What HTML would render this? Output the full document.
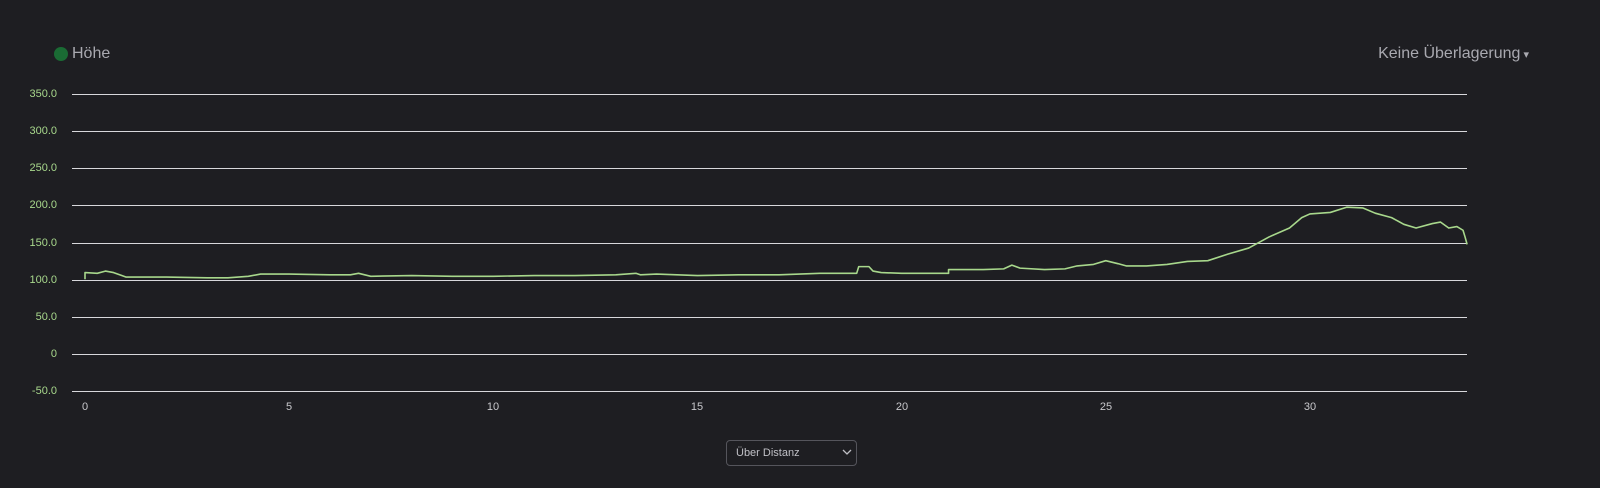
<!DOCTYPE html>
<html><head><meta charset="utf-8"><style>
html,body{margin:0;padding:0;width:1600px;height:488px;background:#1e1e22;overflow:hidden;font-family:"Liberation Sans",sans-serif}
.leg{position:absolute;left:54px;top:45px;color:#a9a9b0;font-size:16px;line-height:18px}
.dot{position:absolute;left:54px;top:47px;width:14px;height:14px;border-radius:50%;background:#1a6b34}
.over{position:absolute;right:71px;top:45px;color:#a9a9b0;font-size:16px}
.yl{position:absolute;right:1543px;color:#a8d88c;font-size:11px;text-align:right;width:50px}
.xl{position:absolute;top:401px;color:#c8c8cc;font-size:11px;transform:translateX(-50%)}
.sel{position:absolute;left:726px;top:440px;width:131px;height:26px;border:1px solid #55555c;border-radius:4px;box-sizing:border-box;color:#c0c0c6;font-size:11px;line-height:24px;padding-left:9px}
</style></head><body>
<div class="dot"></div><div class="leg" style="left:72px">Höhe</div>
<div class="over">Keine Überlagerung<span style="font-size:11px"> ▾</span></div>
<svg width="1600" height="488" style="position:absolute;left:0;top:0">
<g stroke="#d8d8dc" stroke-width="1">
<line x1="72" x2="1467" y1="94.5" y2="94.5"/><line x1="72" x2="1467" y1="131.5" y2="131.5"/>
<line x1="72" x2="1467" y1="168.5" y2="168.5"/><line x1="72" x2="1467" y1="205.5" y2="205.5"/>
<line x1="72" x2="1467" y1="243.5" y2="243.5"/><line x1="72" x2="1467" y1="280.5" y2="280.5"/>
<line x1="72" x2="1467" y1="317.5" y2="317.5"/><line x1="72" x2="1467" y1="354.5" y2="354.5"/>
<line x1="72" x2="1467" y1="391.5" y2="391.5"/>
</g>
<g transform="translate(85,354.25) scale(40.83,-0.7425)">
<polyline fill="none" stroke="#a8d88c" stroke-width="1.6" vector-effect="non-scaling-stroke" stroke-linejoin="round" points="0,101 0,110 0.3,109 0.5,112 0.7,110 0.9,106 1,104 2,104 3,103 3.5,103 4,105 4.3,108 5,108 6,107 6.5,107 6.7,109 7,105 8,106 9,105 10,105 11,106 12,106 13,107 13.5,109 13.6,107 14,108 14.5,107 15,106 16,107 17,107 18,109 18.9,109 18.95,118 19.2,118 19.3,112 19.5,110 20,109 21,109 21.15,109 21.15,114 22,114 22.5,115 22.7,120 22.9,116 23.5,114 24,115 24.3,119 24.7,121 25,126 25.3,122 25.5,119 26,119 26.5,121 27,125 27.5,126 28,135 28.5,143 29,158 29.5,170 29.8,184 30,189 30.5,191 30.9,198 31.3,197 31.6,190 32,184 32.3,175 32.6,170 33,176 33.2,178 33.4,170 33.6,172 33.75,167 33.8,158 33.85,148"/>
</g>
<path d="M843 450l4 4 4-4" fill="none" stroke="#c0c0c6" stroke-width="1.3"/>
</svg>
<div class="yl" style="top:88px">350.0</div><div class="yl" style="top:125px">300.0</div>
<div class="yl" style="top:162px">250.0</div><div class="yl" style="top:199px">200.0</div>
<div class="yl" style="top:237px">150.0</div><div class="yl" style="top:274px">100.0</div>
<div class="yl" style="top:311px">50.0</div><div class="yl" style="top:348px">0</div>
<div class="yl" style="top:385px">-50.0</div>
<div class="xl" style="left:85px">0</div><div class="xl" style="left:289px">5</div>
<div class="xl" style="left:493px">10</div><div class="xl" style="left:697px">15</div>
<div class="xl" style="left:902px">20</div><div class="xl" style="left:1106px">25</div>
<div class="xl" style="left:1310px">30</div>
<div class="sel">Über Distanz</div>
</body></html>
